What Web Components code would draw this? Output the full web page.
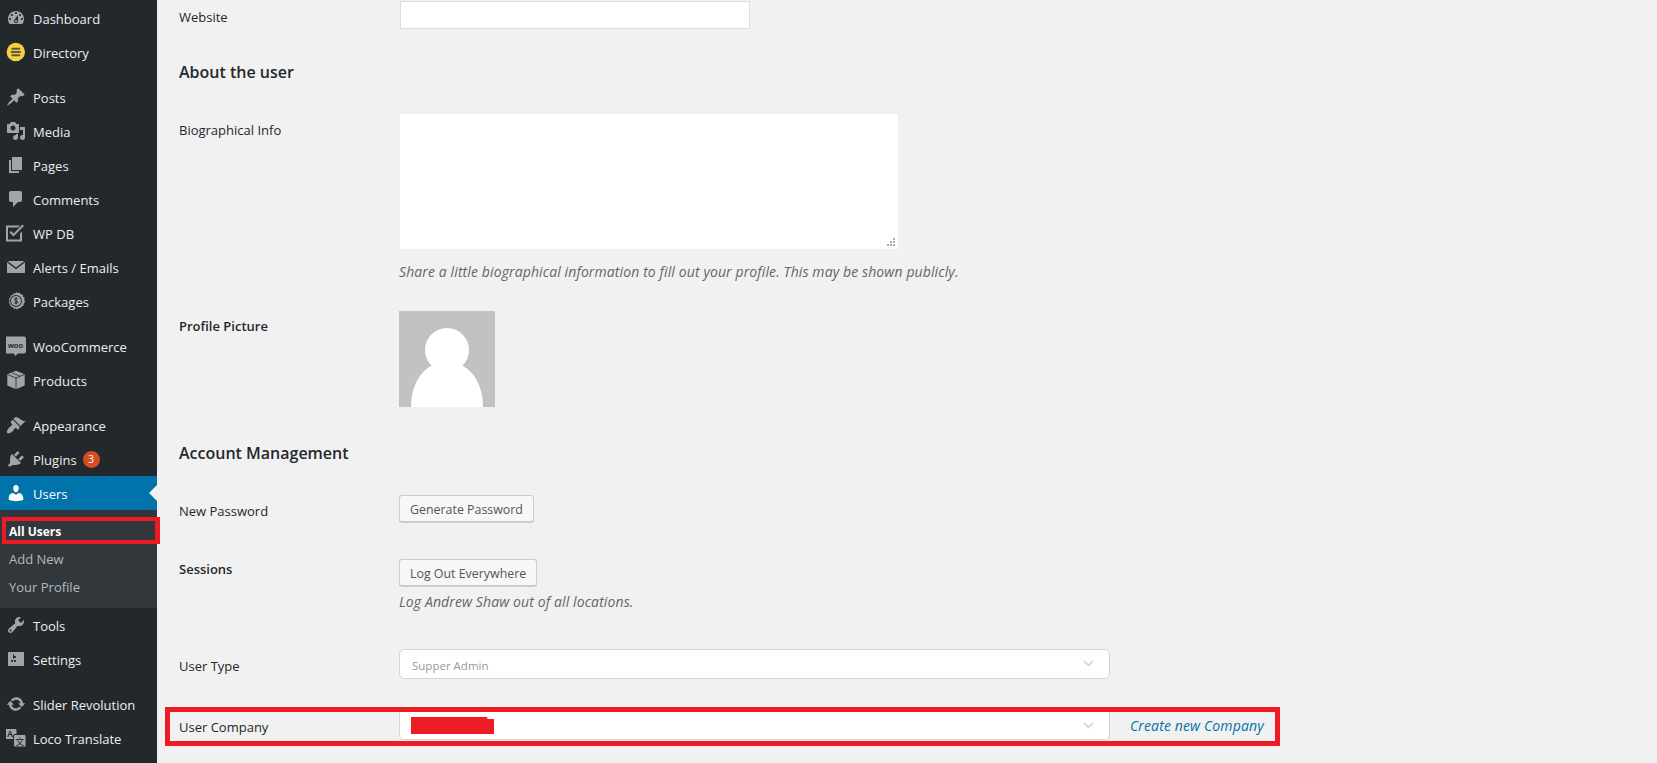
<!doctype html>
<html>
<head>
<meta charset="utf-8">
<title>Profile</title>
<style>
html, body { margin: 0; height: 100%; overflow: hidden; background: #f1f1f1; }
body { font-family: "Open Sans", "Noto Sans", sans-serif; font-size: 13px; color: #23282d; }
wp-page { height: 763px; }
</style>
</head>
<body>
<wp-page>
  <wp-sidebar slot="side">
    <wp-item icon="dashboard">Dashboard</wp-item>
    <wp-item icon="directory">Directory</wp-item>
    <wp-gap></wp-gap>
    <wp-item icon="post">Posts</wp-item>
    <wp-item icon="media">Media</wp-item>
    <wp-item icon="page">Pages</wp-item>
    <wp-item icon="comment">Comments</wp-item>
    <wp-item icon="check">WP DB</wp-item>
    <wp-item icon="email">Alerts / Emails</wp-item>
    <wp-item icon="coin">Packages</wp-item>
    <wp-gap></wp-gap>
    <wp-item icon="woo">WooCommerce</wp-item>
    <wp-item icon="box">Products</wp-item>
    <wp-gap></wp-gap>
    <wp-item icon="brush">Appearance</wp-item>
    <wp-item icon="plug" badge="3">Plugins</wp-item>
    <wp-item icon="user" current>Users</wp-item>
    <wp-submenu>
      <wp-subitem marked>All Users</wp-subitem>
      <wp-subitem>Add New</wp-subitem>
      <wp-subitem>Your Profile</wp-subitem>
    </wp-submenu>
    <wp-item icon="wrench">Tools</wp-item>
    <wp-item icon="sliders">Settings</wp-item>
    <wp-gap></wp-gap>
    <wp-item icon="update">Slider Revolution</wp-item>
    <wp-item icon="translate">Loco Translate</wp-item>
  </wp-sidebar>

  <wp-row label="Website" style="--top:1px;--label-top:7px">
    <wp-input></wp-input>
  </wp-row>
  <wp-heading style="--top:31px">About the user</wp-heading>
  <wp-row label="Biographical Info" style="--top:30px;--label-top:7px">
    <wp-textarea></wp-textarea>
    <wp-desc style="--top:13px">Share a little biographical information to fill out your profile. This may be shown publicly.</wp-desc>
  </wp-row>
  <wp-row label="Profile Picture" strong style="--top:29px;--label-top:6px">
    <wp-avatar></wp-avatar>
  </wp-row>
  <wp-heading style="--top:34px">Account Management</wp-heading>
  <wp-row label="New Password" style="--top:30px;--label-top:7px">
    <wp-button>Generate Password</wp-button>
  </wp-row>
  <wp-row label="Sessions" strong style="--top:37px;--label-top:1px">
    <wp-button>Log Out Everywhere</wp-button>
    <wp-desc style="--top:6px">Log Andrew Shaw out of all locations.</wp-desc>
  </wp-row>
  <wp-row label="User Type" style="--top:37px;--label-top:8px">
    <wp-select style="--c:#999" value="Supper Admin"></wp-select>
  </wp-row>
  <wp-row label="User Company" marked style="--top:28px">
    <wp-select redacted></wp-select>
    <a slot="after" href="#" onclick="return false">Create new Company</a>
  </wp-row>
</wp-page>

<script>
const ICONS = {
  dashboard: '<path d="M3.76 16h12.48c1.1-1.37 1.76-3.11 1.76-5 0-4.42-3.58-8-8-8s-8 3.58-8 8c0 1.89.66 3.63 1.76 5zM10 4c.55 0 1 .45 1 1s-.45 1-1 1-1-.45-1-1 .45-1 1-1zM6 6c.55 0 1 .45 1 1s-.45 1-1 1-1-.45-1-1 .45-1 1-1zm8 0c.55 0 1 .45 1 1s-.45 1-1 1-1-.45-1-1 .45-1 1-1zm-5.37 5.55L12 7v6c0 1.1-.9 2-2 2s-2-.9-2-2c0-.57.24-1.08.63-1.45zM4 10c.55 0 1 .45 1 1s-.45 1-1 1-1-.45-1-1 .45-1 1-1zm12 0c.55 0 1 .45 1 1s-.45 1-1 1-1-.45-1-1 .45-1 1-1zm-5 3c0-.55-.45-1-1-1s-1 .45-1 1 .45 1 1 1 1-.45 1-1z" fill-rule="evenodd"/>',
  directory: '<circle cx="9.800" cy="10" r="9.200" fill="#f8cf3f"/><g fill="#5d5a3a"><rect x="5.300" y="5.800" width="9" height="2" rx="1"/><rect x="4.600" y="9" width="10.400" height="2" rx="1"/><rect x="5.300" y="12.200" width="9" height="2" rx="1"/></g>',
  post: '<path d="M10.44 3.02l1.82-1.82 6.36 6.35-1.83 1.82c-1.05-.68-2.48-.57-3.41.36l-.75.75c-.92.93-1.04 2.35-.35 3.41l-1.83 1.82-2.41-2.41-2.8 2.79c-.42.42-3.38 2.71-3.8 2.29s1.86-3.39 2.28-3.81l2.79-2.79L4.1 9.36l1.83-1.82c1.05.69 2.48.57 3.4-.36l.75-.75c.93-.92 1.05-2.35.36-3.41z"/>',
  media: '<path d="M13 11V4c0-.55-.45-1-1-1h-1.67L9 1H5L3.67 3H2c-.55 0-1 .45-1 1v7c0 .55.45 1 1 1h10c.55 0 1-.45 1-1zM7 4.5c1.38 0 2.5 1.12 2.5 2.5S8.38 9.5 7 9.5 4.5 8.38 4.5 7 5.62 4.5 7 4.5zM14 6h5v10.5c0 1.38-1.12 2.5-2.5 2.5S14 17.88 14 16.5s1.12-2.5 2.5-2.5c.17 0 .34.02.5.05V9h-3V6zm-4 8.05V13h2v3.5c0 1.38-1.12 2.5-2.5 2.5S7 17.88 7 16.5 8.12 14 9.5 14c.17 0 .34.02.5.05z" fill-rule="evenodd"/>',
  page: '<path d="M6 15V2h10v13H6zm-1 1h8v2H3V5h2v11z"/>',
  comment: '<path d="M5 2h9c1.1 0 2 .9 2 2v7c0 1.1-.9 2-2 2h-2l-5 5v-5H5c-1.1 0-2-.9-2-2V4c0-1.1.9-2 2-2z"/>',
  check: '<path d="M0 2.500h14l-2 2H2v12h12v-6l2-2v10H0z"/><path d="M16.500 1.500l1.400 1.400L7.500 13.500 3.500 9.500 5.100 8l2.400 2.400z"/>',
  email: '<path d="M1.500 4h17L10 10.500zM1 5.200l9 7 9-7V15.500c0 .3-.2.5-.5.5h-17c-.3 0-.5-.2-.5-.5z"/>',
  coin: '<path fill-rule="evenodd" d="M10 1l1.700 1.100 2-.4 1.100 1.600 2 .5.300 2 1.600 1.300-.5 2 .9 1.900-1.400 1.500-.1 2-1.900.8-.9 1.800-2 0-1.600 1.300-1.700-1-2 .1-1.200-1.600-1.900-.7-.2-2-1.400-1.500.7-1.900-.6-2 1.500-1.300.2-2 2-.6 1-1.700 2 .3zM10 4a6 6 0 1 0 0 12a6 6 0 1 0 0-12z"/><path fill-rule="evenodd" d="M10 5a5 5 0 1 0 0 10a5 5 0 1 0 0-10z"/><path d="M11.800 8c-.3-.8-3.400-1.100-3.400.5 0 1.700 3.400.9 3.400 2.700 0 1.600-3.200 1.300-3.600.4M10 6.500v7" fill="none" stroke="#23282d" stroke-width="1"/>',
  woo: '<path d="M1 .5h17c1 0 2 1 2 2v13c0 1-1 2-2 2h-6l-3 2.500-1-2.500h-7c-1 0-2-1-2-2v-13c0-1 1-2 2-2z"/><text x="9.500" y="11.500" font-size="7.500" font-weight="700" text-anchor="middle" fill="#23282d" font-family="Liberation Sans, sans-serif" textLength="15" lengthAdjust="spacingAndGlyphs">woo</text>',
  box: '<path d="M10 .8l8.700 3.400v11.400L10 19.200 1.300 15.600V4.200z"/><path d="M1.800 4.600L10 8l8.200-3.400M10 8v11M6 2.800l8 3.500" fill="none" stroke="#23282d" stroke-width=".8"/>',
  brush: '<path d="M14.480 11.060L7.410 3.990l1.500-1.500c.5-.56 2.300-.47 3.510.32 1.210.8 1.430 1.280 2.910 2.100 1.180.64 2.450 1.260 4.450.85zm-.71.71L6.700 4.700 4.930 6.470c-.39.39-.39 1.020 0 1.410l1.060 1.060c.39.39.39 1.030 0 1.420-.6.6-1.430 1.110-2.210 1.690-.35.26-.7.53-1.010.84-1.400 1.400-2.600 4.200-1.600 5.200s3.800-.2 5.200-1.600c.31-.31.58-.66.84-1.010.58-.78 1.090-1.610 1.690-2.210.39-.39 1.030-.39 1.420 0l1.060 1.060c.39.39 1.020.39 1.410 0z"/>',
  plug: '<path d="M13.110 4.360L9.870 7.600 8 5.730l3.240-3.240c.35-.34 1.050-.2 1.560.32.52.51.66 1.210.31 1.550zm-8 1.770l.91-1.120 9.010 9.010-1.190.84c-.71.71-2.630 1.160-3.820 1.160H6.140L4.900 17.260c-.59.59-1.540.59-2.120 0-.59-.58-.59-1.530 0-2.120l1.240-1.240v-3.880c0-1.130.4-3.190 1.090-3.890zm7.260 3.970l3.240-3.240c.34-.35 1.040-.21 1.550.31.52.51.66 1.210.31 1.550l-3.240 3.250z"/>',
  user: '<path d="M10 9.250c-2.270 0-2.730-3.440-2.730-3.440C7 4.020 7.820 2 9.970 2c2.160 0 2.980 2.020 2.710 3.810 0 0-.41 3.440-2.680 3.440zm0 2.570L12.720 10c2.390 0 4.520 2.330 4.520 4.530v2.490s-3.650 1.130-7.240 1.130c-3.650 0-7.240-1.130-7.240-1.130v-2.490c0-2.250 1.940-4.480 4.470-4.480z"/>',
  wrench: '<path fill-rule="evenodd" d="M16.680 9.770c-1.340 1.340-3.300 1.670-4.950.99l-5.41 6.520c-.99.99-2.590.99-3.580 0s-.99-2.590 0-3.570l6.520-5.420c-.68-1.650-.35-3.610.99-4.950 1.280-1.280 3.120-1.620 4.720-1.060l-2.890 2.890 2.820 2.820 2.860-2.870c.53 1.580.18 3.390-1.080 4.650zM3.810 16.210c.4.39 1.040.39 1.430 0 .4-.4.4-1.040 0-1.430-.39-.4-1.030-.4-1.430 0-.39.39-.39 1.030 0 1.430z"/>',
  sliders: '<path fill-rule="evenodd" d="M18 16V4c0-.55-.45-1-1-1H3c-.55 0-1 .45-1 1v12c0 .55.45 1 1 1h14c.55 0 1-.45 1-1zM8 11h1c.55 0 1 .45 1 1s-.45 1-1 1H8v1.500c0 .28-.22.5-.5.5s-.5-.22-.5-.5V13H6c-.55 0-1-.45-1-1s.45-1 1-1h1V5.500c0-.28.22-.5.5-.5s.5.22.5.5V7h1c.55 0 1 .45 1 1s-.45 1-1 1h-1v5.500c0 .28-.22.5-.5.5s-.5-.22-.5-.5V9z"/>',
  update: '<path d="M10.200 3.280c3.530 0 6.430 2.610 6.920 6h2.080l-3.500 4-3.500-4h2.320c-.45-1.970-2.210-3.440-4.320-3.440-1.450 0-2.730.71-3.540 1.780L4.950 5.660C6.230 4.200 8.110 3.280 10.200 3.280zm-.4 13.440c-3.520 0-6.430-2.610-6.920-6H.8l3.500-4c1.170 1.330 2.330 2.670 3.500 4H5.480c.45 1.970 2.210 3.440 4.320 3.440 1.450 0 2.730-.71 3.540-1.770l1.710 1.950c-1.280 1.460-3.150 2.380-5.250 2.380z"/>',
  translate: '<rect x="-1" y="1" width="11.500" height="10" rx="1"/><rect x="7.500" y="6.500" width="12.500" height="12.500" rx="1.500" stroke="#23282d" stroke-width="1"/><text x="4" y="9" font-size="8.500" font-weight="700" text-anchor="middle" fill="#23282d" font-family="Liberation Sans, sans-serif">A</text><text x="13.700" y="17" font-size="9" text-anchor="middle" fill="#23282d" font-family="Noto Sans CJK SC, sans-serif">文</text>'
};

class WpPage extends HTMLElement {
  constructor() {
    super();
    this.attachShadow({mode: "open"}).innerHTML = `
    <style>
      :host { display: grid; grid-template-columns: 157px 1fr; }
      main { padding-left: 22px; min-width: 0; }
    </style>
    <slot name="side"></slot>
    <main><slot></slot></main>`;
  }
}

class WpSidebar extends HTMLElement {
  constructor() {
    super();
    this.attachShadow({mode: "open"}).innerHTML = `
    <style>
      :host { display: block; background: #23282d; padding-top: 1px; height: 762px; }
    </style>
    <slot></slot>`;
  }
}

class WpGap extends HTMLElement {
  constructor() {
    super();
    this.attachShadow({mode: "open"}).innerHTML = `<style>:host { display: block; height: 11px; }</style>`;
  }
}

class WpItem extends HTMLElement {
  constructor() {
    super();
    const icon = ICONS[this.getAttribute("icon")] || "";
    const badge = this.getAttribute("badge");
    this.attachShadow({mode: "open"}).innerHTML = `
    <style>
      :host { display: flex; align-items: center; height: 34px; color: #eee; font-size: 13px; position: relative; }
      :host([current]) { background: #0073aa; color: #fff; }
      :host([current]) svg { fill: #fff; }
      :host([current])::after { content: ""; position: absolute; right: 0; top: 9px; border: 8px solid transparent; border-right-color: #f1f1f1; border-left-width: 0; }
      svg { width: 20px; height: 20px; margin: 0 7px 0 6px; fill: #a0a5aa; flex: none; }
      .text { padding-top: 2px; }
      .badge { margin-left: 6px; width: 17px; height: 17px; border-radius: 50%; background: #d54e21; color: #fff; font-size: 10px; line-height: 17px; text-align: center; }
    </style>
    <svg viewBox="0 0 20 20">${icon}</svg><span class="text"><slot></slot></span>${badge ? `<span class="badge">${badge}</span>` : ""}`;
  }
}

class WpSubmenu extends HTMLElement {
  constructor() {
    super();
    this.attachShadow({mode: "open"}).innerHTML = `
    <style>:host { display: block; background: #32373c; padding: 7px 0; }</style>
    <slot></slot>`;
  }
}

class WpSubitem extends HTMLElement {
  constructor() {
    super();
    this.attachShadow({mode: "open"}).innerHTML = `
    <style>
      :host { display: flex; align-items: center; height: 28px; padding-left: 9px; color: #b4b9be; font-size: 13px; box-sizing: border-box; }
      :host([marked]) { height: 27px; margin: 0 -3px 1px 2px; padding: 2px 0 0 3px; border: 4px solid #ed1c24; border-right-width: 5px; color: #fff; font-weight: 700; font-size: 12px; position: relative; }
    </style>
    <slot></slot>`;
  }
}

class WpHeading extends HTMLElement {
  constructor() {
    super();
    this.attachShadow({mode: "open"}).innerHTML = `
    <style>
      :host { display: block; margin-top: var(--top, 0); font-size: 16px; font-weight: 600; line-height: 24px; color: #23282d; }
    </style>
    <slot></slot>`;
  }
}

class WpRow extends HTMLElement {
  constructor() {
    super();
    const label = this.getAttribute("label");
    this.attachShadow({mode: "open"}).innerHTML = `
    <style>
      :host { display: grid; grid-template-columns: 221px auto 1fr; margin-top: var(--top, 0); }
      :host([strong]) .label { font-weight: 600; }
      :host([marked]) { width: 1115px; height: 39px; margin-left: -14px; padding-left: 9px; border: 5px solid #ed1c24; box-sizing: border-box; }
      :host([marked]) .label { padding-top: 6px; }
      :host([marked]) .after { padding-top: 4px; }
      .label { padding-top: var(--label-top, 0); line-height: 18px; }
      .after { padding-left: 19px; font-style: italic; font-size: 14px; letter-spacing: .13px; line-height: 20px; white-space: nowrap; }
      ::slotted(a) { color: #0073aa; text-decoration: none; }
      .field { width: 711px; }
    </style>
    <div class="label">${label}</div>
    <div class="field"><slot></slot></div>
    <div class="after"><slot name="after"></slot></div>`;
  }
}

class WpInput extends HTMLElement {
  constructor() {
    super();
    this.attachShadow({mode: "open"}).innerHTML = `
    <style>
      :host { display: block; width: 350px; height: 28px; box-sizing: border-box; background: #fff; border: 1px solid #ddd; }
    </style>`;
  }
}

class WpTextarea extends HTMLElement {
  constructor() {
    super();
    this.attachShadow({mode: "open"}).innerHTML = `
    <style>
      :host { display: block; width: 498px; height: 135px; background: #fff; position: relative; }
      svg { position: absolute; right: 2px; bottom: 2px; }
    </style>
    <svg width="9" height="9" viewBox="0 0 9 9" fill="#aaa"><rect x="6" y="0" width="2" height="2"/><rect x="3" y="3" width="2" height="2"/><rect x="6" y="3" width="2" height="2"/><rect x="0" y="6" width="2" height="2"/><rect x="3" y="6" width="2" height="2"/><rect x="6" y="6" width="2" height="2"/></svg>`;
  }
}

class WpDesc extends HTMLElement {
  constructor() {
    super();
    this.attachShadow({mode: "open"}).innerHTML = `
    <style>
      :host { display: block; margin: var(--top, 0) 0 0 -1px; font-style: italic; font-size: 14px; letter-spacing: .11px; color: #666; line-height: 20px; white-space: nowrap; }
    </style>
    <slot></slot>`;
  }
}

class WpAvatar extends HTMLElement {
  constructor() {
    super();
    this.attachShadow({mode: "open"}).innerHTML = `
    <style>:host { display: block; width: 96px; height: 96px; margin-left: -1px; } svg { display: block; }</style>
    <svg width="96" height="96" viewBox="0 0 96 96"><rect width="96" height="96" fill="#c2c2c2"/><ellipse cx="48" cy="39" rx="22" ry="22" fill="#fff"/><path d="M12 96c0-28 16-45 36-45s36 17 36 45z" fill="#fff"/></svg>`;
  }
}

class WpButton extends HTMLElement {
  constructor() {
    super();
    this.attachShadow({mode: "open"}).innerHTML = `
    <style>
      :host { display: flex; align-items: center; width: fit-content; height: 27px; box-sizing: border-box; margin-left: -1px; padding: 1px 10px 0; background: #f7f7f7; border: 1px solid #ccc; border-radius: 3px; box-shadow: 0 1px 0 #ccc; color: #555; font-size: 12.4px; }
    </style>
    <slot></slot>`;
  }
}

class WpSelect extends HTMLElement {
  constructor() {
    super();
    const redacted = this.hasAttribute("redacted");
    this.attachShadow({mode: "open"}).innerHTML = `
    <style>
      :host { display: flex; align-items: center; justify-content: space-between; width: 711px; height: 30px; box-sizing: border-box; margin-left: -1px; padding: 0 15px 0 12px; background: #fff; border: 1px solid #d5d5d5; border-radius: 5px; color: var(--c, #666); font-size: 11.5px; }
      :host([redacted]) { height: 28px; padding-left: 11px; border-top: 0; border-radius: 0 0 5px 5px; }
      .value { padding-top: 2px; }
      .red { width: 83px; height: 17px; background: #ed1c24; clip-path: polygon(0 0, 92% 0, 92% 12%, 100% 12%, 100% 100%, 0 100%); }
      svg { flex: none; }
      :host(:not([redacted])) svg { margin-bottom: 2px; }
    </style>
    ${redacted ? '<span class="red"></span>' : `<span class="value">${this.getAttribute("value") || ""}</span>`}
    <svg width="11" height="7" viewBox="0 0 11 7"><path d="M1 1l4.500 4.500L10 1" fill="none" stroke="#d8d8d8" stroke-width="1.800"/></svg>`;
  }
}

customElements.define("wp-page", WpPage);
customElements.define("wp-sidebar", WpSidebar);
customElements.define("wp-gap", WpGap);
customElements.define("wp-item", WpItem);
customElements.define("wp-submenu", WpSubmenu);
customElements.define("wp-subitem", WpSubitem);
customElements.define("wp-heading", WpHeading);
customElements.define("wp-row", WpRow);
customElements.define("wp-input", WpInput);
customElements.define("wp-textarea", WpTextarea);
customElements.define("wp-desc", WpDesc);
customElements.define("wp-avatar", WpAvatar);
customElements.define("wp-button", WpButton);
customElements.define("wp-select", WpSelect);
</script>
</body>
</html>
